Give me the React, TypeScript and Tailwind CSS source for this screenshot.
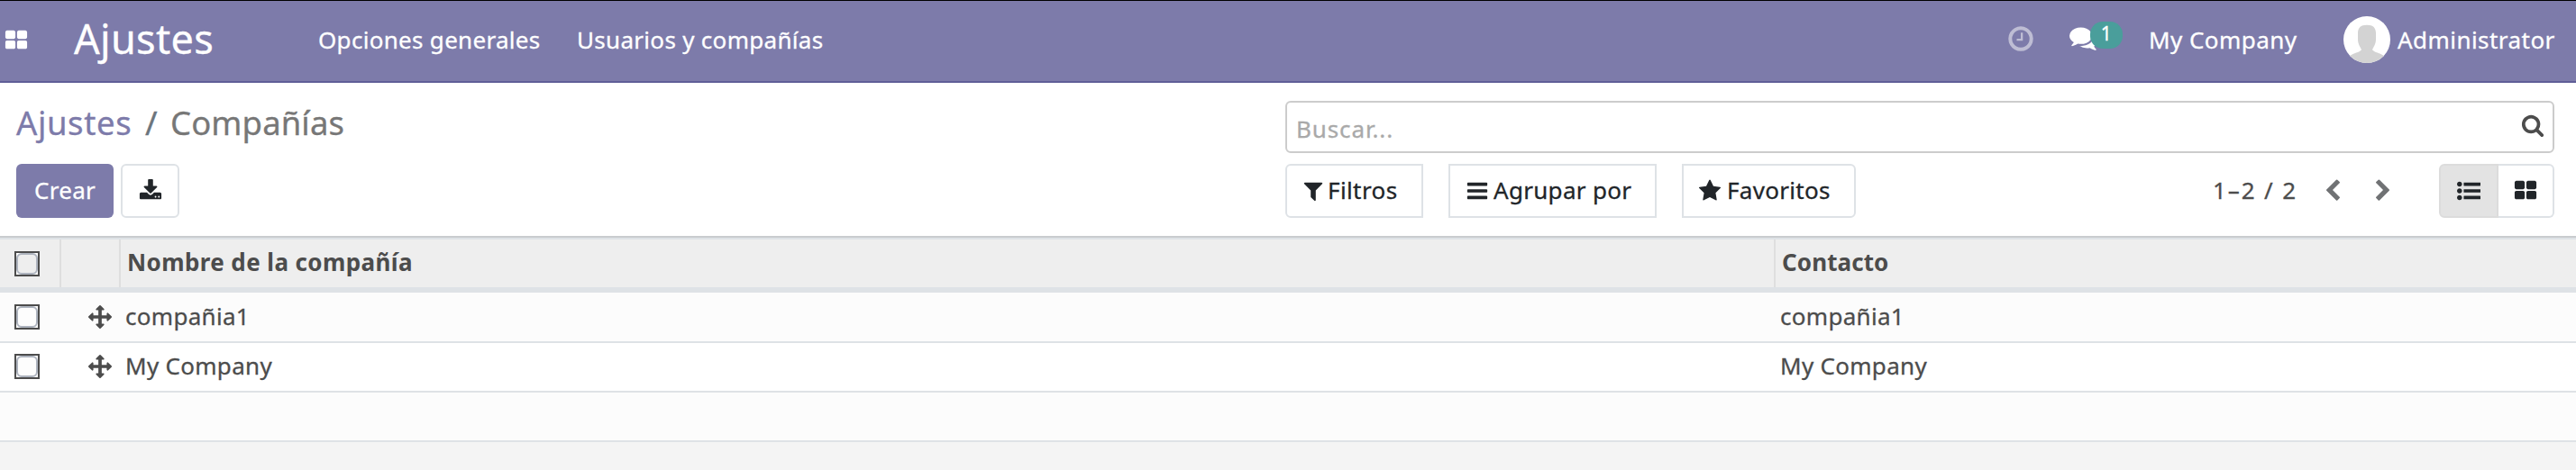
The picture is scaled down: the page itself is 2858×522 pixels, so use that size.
import React from "react";

const paths = {
  thLarge:
    "M832 1024v384q0 52-38 90t-90 38h-512q-52 0-90-38t-38-90v-384q0-52 38-90t90-38h512q52 0 90 38t38 90zm0-768v384q0 52-38 90t-90 38h-512q-52 0-90-38t-38-90v-384q0-52 38-90t90-38h512q52 0 90 38t38 90zm896 768v384q0 52-38 90t-90 38h-512q-52 0-90-38t-38-90v-384q0-52 38-90t90-38h512q52 0 90 38t38 90zm0-768v384q0 52-38 90t-90 38h-512q-52 0-90-38t-38-90v-384q0-52 38-90t90-38h512q52 0 90 38t38 90z",
  clock:
    "M1024 544v448q0 14-9 23t-23 9h-320q-14 0-23-9t-9-23v-64q0-14 9-23t23-9h224v-352q0-14 9-23t23-9h64q14 0 23 9t9 23zm416 352q0-148-73-273t-198-198-273-73-273 73-198 198-73 273 73 273 198 198 273 73 273-73 198-198 73-273zm224 0q0 209-103 385.5t-279.5 279.5-385.5 103-385.5-103-279.5-279.5-103-385.5 103-385.5 279.5-279.5 385.5-103 385.5 103 279.5 279.5 103 385.5z",
  comments:
    "M1408 768q0 139-94 257t-256.5 186.5-353.5 68.5q-86 0-176-16-124 88-278 128-36 9-86 16h-3q-11 0-20.5-8t-11.5-21q-1-3-1-6.5t.5-6.5 2-6l2.5-5 3.5-5.5 4-5 4.5-5 4-4.5q5-6 23-25t26-29.5 22.5-29 25-38.5 20.5-44q-124-72-195-177t-71-224q0-139 94-257t256.5-186.5 353.5-68.5 353.5 68.5 256.5 186.5 94 257zm384 256q0 120-71 224.5t-195 176.5q10 24 20.5 44t25 38.5 22.5 29 26 29.5 23 25q1 1 4 4.5t4.5 5 4 5 3.5 5.5l2.5 5 2 6 .5 6.5-1 6.5q-3 14-13 22t-22 7q-50-7-86-16-154-40-278-128-90 16-176 16-271 0-472-132 58 4 88 4 161 0 309-45t264-129q125-92 192-212t67-254q0-77-23-152 129 71 204 178t75 230z",
  download:
    "M1344 1344q0-26-19-45t-45-19-45 19-19 45 19 45 45 19 45-19 19-45zm256 0q0-26-19-45t-45-19-45 19-19 45 19 45 45 19 45-19 19-45zm128-224v320q0 40-28 68t-68 28h-1472q-40 0-68-28t-28-68v-320q0-40 28-68t68-28h465l135 136q58 56 136 56t136-56l136-136h464q40 0 68 28t28 68zm-325-569q17 41-14 70l-448 448q-18 19-45 19t-45-19l-448-448q-31-29-14-70 17-39 59-39h256v-448q0-26 19-45t45-19h256q26 0 45 19t19 45v448h256q42 0 59 39z",
  filter:
    "M1595 295q17 41-14 70l-493 493v742q0 42-39 59-13 5-25 5-27 0-45-19l-256-256q-19-19-19-45v-486l-493-493q-31-29-14-70 17-39 59-39h1280q42 0 59 39z",
  bars:
    "M1664 1344v128q0 26-19 45t-45 19h-1408q-26 0-45-19t-19-45v-128q0-26 19-45t45-19h1408q26 0 45 19t19 45zm0-512v128q0 26-19 45t-45 19h-1408q-26 0-45-19t-19-45v-128q0-26 19-45t45-19h1408q26 0 45 19t19 45zm0-512v128q0 26-19 45t-45 19h-1408q-26 0-45-19t-19-45v-128q0-26 19-45t45-19h1408q26 0 45 19t19 45z",
  star:
    "M1728 647q0 22-26 48l-363 354 86 500q1 7 1 20 0 21-10.5 35.5t-30.5 14.5q-19 0-40-12l-449-236-449 236q-22 12-40 12-21 0-31.5-14.5t-10.5-35.5q0-6 2-20l86-500-364-354q-25-27-25-48 0-37 56-46l502-73 225-455q19-41 49-41t49 41l225 455 502 73q56 9 56 46z",
  search:
    "M1216 832q0-185-131.5-316.5t-316.5-131.5-316.5 131.5-131.5 316.5 131.5 316.5 316.5 131.5 316.5-131.5 131.5-316.5zm512 832q0 52-38 90t-90 38q-54 0-90-38l-343-342q-179 124-399 124-143 0-273.5-55.5t-225-150-150-225-55.5-273.5 55.5-273.5 150-225 225-150 273.5-55.5 273.5 55.5 225 150 150 225 55.5 273.5q0 220-124 399l343 343q37 37 37 90z",
  chevronLeft:
    "M1427 301l-531 531 531 531q19 19 19 45t-19 45l-166 166q-19 19-45 19t-45-19l-742-742q-19-19-19-45t19-45l742-742q19-19 45-19t45 19l166 166q19 19 19 45t-19 45z",
  chevronRight:
    "M1363 877l-742 742q-19 19-45 19t-45-19l-166-166q-19-19-19-45t19-45l531-531-531-531q-19-19-19-45t19-45l166-166q19-19 45-19t45 19l742 742q19 19 19 45t-19 45z",
  list:
    "M384 1408q0 80-56 136t-136 56-136-56-56-136 56-136 136-56 136 56 56 136zm0-512q0 80-56 136t-136 56-136-56-56-136 56-136 136-56 136 56 56 136zm1408 416v192q0 13-9.5 22.5t-22.5 9.5h-1216q-13 0-22.5-9.5t-9.5-22.5v-192q0-13 9.5-22.5t22.5-9.5h1216q13 0 22.5 9.5t9.5 22.5zm-1408-928q0 80-56 136t-136 56-136-56-56-136 56-136 136-56 136 56 56 136zm1408 416v192q0 13-9.5 22.5t-22.5 9.5h-1216q-13 0-22.5-9.5t-9.5-22.5v-192q0-13 9.5-22.5t22.5-9.5h1216q13 0 22.5 9.5t9.5 22.5zm0-512v192q0 13-9.5 22.5t-22.5 9.5h-1216q-13 0-22.5-9.5t-9.5-22.5v-192q0-13 9.5-22.5t22.5-9.5h1216q13 0 22.5 9.5t9.5 22.5z",
  arrows:
    "M1792 896q0 26-19 45l-256 256q-19 19-45 19t-45-19-19-45v-128h-384v384h128q26 0 45 19t19 45-19 45l-256 256q-19 19-45 19t-45-19l-256-256q-19-19-19-45t19-45 45-19h128v-384h-384v128q0 26-19 45t-45 19-45-19l-256-256q-19-19-19-45t19-45l256-256q19-19 45-19t45 19 19 45v128h384v-384h-128q-26 0-45-19t-19-45 19-45l256-256q19-19 45-19t45 19l256 256q19 19 19 45t-19 45-45 19h-128v384h384v-128q0-26 19-45t45-19 45 19l256 256q19 19 19 45z",
};

function Icon({ name, className = "size-[26px]" }: { name: keyof typeof paths; className?: string }) {
  return (
    <svg viewBox="0 0 1792 1792" fill="currentColor" overflow="visible" className={`block shrink-0 ${className}`}>
      <path d={paths[name]} />
    </svg>
  );
}

function Checkbox({ fill = "bg-[#fdfdfd]" }: { fill?: string }) {
  return (
    <span className="block size-7 border-2 border-[#4c4c4c] bg-white">
      <span className={`block size-6 rounded-[6px] border-2 border-[#adb3be] ${fill}`} />
    </span>
  );
}

function Navbar() {
  return (
    <header className="flex h-[92px] items-start border-t border-b-2 border-t-black border-b-[#5f5e97] bg-[#7d7baa] text-[26px] leading-[36px] text-white">
      <Icon name="thLarge" className="mt-[30.5px] ml-[5px] size-[26px]" />
      <span className="mt-[12px] ml-[51px] w-[271px] text-[45px] leading-[60px] tracking-[0.3px]">Ajustes</span>
      <nav className="mt-[25px] flex">
        <a className="w-[287px]">Opciones generales</a>
        <a>Usuarios y compañías</a>
      </nav>
      <div className="ml-auto flex">
        <Icon name="clock" className="mt-[26px] size-8 opacity-50" />
        <div className="relative mt-[25px] ml-[38px] w-[88px]">
          <Icon name="comments" className="size-8" />
          <span className="absolute top-[-2px] left-[23px] flex h-[30px] w-9 items-center justify-center rounded-[14px] bg-[#4a9e9b] pb-1 text-[21px] leading-none">
            1
          </span>
        </div>
        <span className="mt-[25px] w-[216px] tracking-[0.45px]">My Company</span>
        <svg viewBox="0 0 52 52" className="mt-[17px] mr-2 block size-[52px] rounded-full bg-white">
          <path
            d="M26 9.7c7 0 10 3.300 10 9v7c0 5-2.500 8.300-4 11.500 2.500 3.300 8.500 3.300 13 6.800V52H7v-8c4.500-3.500 10.500-3.500 13-6.800-1.500-3.200-4-6.500-4-11.500v-7c0-5.700 3-9 10-9z"
            fill="#d3d3d3"
          />
        </svg>
        <span className="mt-[25px] w-[198px] tracking-[0.45px]">Administrator</span>
      </div>
    </header>
  );
}

function ControlPanel() {
  return (
    <section className="flex h-[170px] items-start bg-white pt-5 pr-6 pl-[18px] text-[26px] leading-[36px]">
      <div className="w-[1408px]">
        <div className="flex h-[70px] text-[36.5px] leading-[48px] tracking-[0.1px]">
          <span className="w-[143px] tracking-[0.6px] text-[#7d7baa]">Ajustes</span>
          <span className="w-[28px] text-[#6c757d]">/</span>
          <span className="text-[#777777]">Compañías</span>
        </div>
        <div className="flex gap-2">
          <button className="flex h-[60px] w-[108px] items-center justify-center rounded-[6px] bg-[#7d7baa] text-white">
            <span className="-mt-0.5">Crear</span>
          </button>
          <button className="flex h-[60px] w-[65px] items-center justify-center rounded-[6px] border-2 border-[#dee2e6] text-[#212529]">
            <Icon name="download" />
          </button>
        </div>
      </div>
      <div className="w-[1408px]">
        <div className="flex h-[58px] items-start justify-between rounded-[6px] border-2 border-[#cccccc] pr-[9px] pl-[10px] text-[#4c4c4c]">
          <span className="mt-[11px] tracking-[0.9px] text-[#a9a9a9]">Buscar...</span>
          <Icon name="search" className="mt-[12px] size-[26px]" />
        </div>
        <div className="mt-3 flex text-[#212529]">
          <button className="flex h-[60px] w-[153px] items-center rounded-l-[6px] border-2 border-[#dee2e6] pl-4">
            <Icon name="filter" />
            <span className="-mt-0.5 ml-[3px] tracking-[0.4px]">Filtros</span>
          </button>
          <button className="ml-7 flex h-[60px] w-[231px] items-center border-2 border-[#dee2e6] pl-[17px]">
            <Icon name="bars" />
            <span className="-mt-0.5 ml-[5px]">Agrupar por</span>
          </button>
          <button className="ml-7 flex h-[60px] w-[193px] items-center rounded-r-[6px] border-2 border-[#dee2e6] pl-4">
            <Icon name="star" />
            <span className="-mt-0.5 ml-[6px]">Favoritos</span>
          </button>
          <div className="ml-auto flex h-[60px] items-center">
            <span className="-mt-0.5 w-[120px] tracking-[1.9px] text-[#4c4c4c]">1–2 / 2</span>
            <Icon name="chevronLeft" className="size-[26px] text-[#707274]" />
            <Icon name="chevronRight" className="ml-[30px] size-[26px] text-[#707274]" />
            <div className="ml-[49px] flex">
              <button className="flex h-[60px] w-[66px] items-center justify-center rounded-l-[6px] border-2 border-[#dcdcdc] bg-[#e3e3e3]">
                <Icon name="list" />
              </button>
              <button className="flex h-[60px] w-[62px] items-center justify-center rounded-r-[6px] border-y-2 border-r-2 border-[#dee2e6]">
                <Icon name="thLarge" />
              </button>
            </div>
          </div>
        </div>
      </div>
    </section>
  );
}

function Row({ name, className }: { name: string; className: string }) {
  return (
    <div className={`flex items-center border-b-2 border-[#dee2e6] ${className}`}>
      <div className="w-[98px] pl-4">
        <Checkbox />
      </div>
      <Icon name="arrows" />
      <span className="-mt-0.5 ml-[15px] w-[1836px]">{name}</span>
      <span className="-mt-0.5">{name}</span>
    </div>
  );
}

export default function App() {
  return (
    <div className="flex h-[522px] w-[2858px] flex-col overflow-hidden bg-[#f4f4f4] font-['Noto_Sans',sans-serif] tracking-[0.3px] [-webkit-text-stroke:0.3px]">
      <Navbar />
      <ControlPanel />
      <main className="border-t-2 border-[#c9cccf] text-[26px] leading-[36px] text-[#4c4c4c]">
        <div className="flex h-[61px] border-t-2 border-b-6 border-[#dee2e6] bg-[#eeeeee] font-bold [-webkit-text-stroke:0px]">
          <div className="w-[68px] border-r-2 border-[#dedede] pt-[13px] pl-4">
            <Checkbox fill="bg-[#eeeeee]" />
          </div>
          <div className="w-[66px] border-r-2 border-[#dedede]" />
          <div className="w-[1836px] border-r-2 border-[#dedede] pt-[7px] pl-[7px] tracking-[0.4px]">
            Nombre de la compañía
          </div>
          <div className="pt-[7px] pl-[7px] tracking-[0.1px]">Contacto</div>
        </div>
        <Row name="compañia1" className="h-14 bg-[#fcfcfc]" />
        <Row name="My Company" className="h-[55px] bg-white pb-px" />
        <div className="h-[55px] border-b-2 border-[#dee2e6] bg-[#fcfcfc]" />
      </main>
    </div>
  );
}
